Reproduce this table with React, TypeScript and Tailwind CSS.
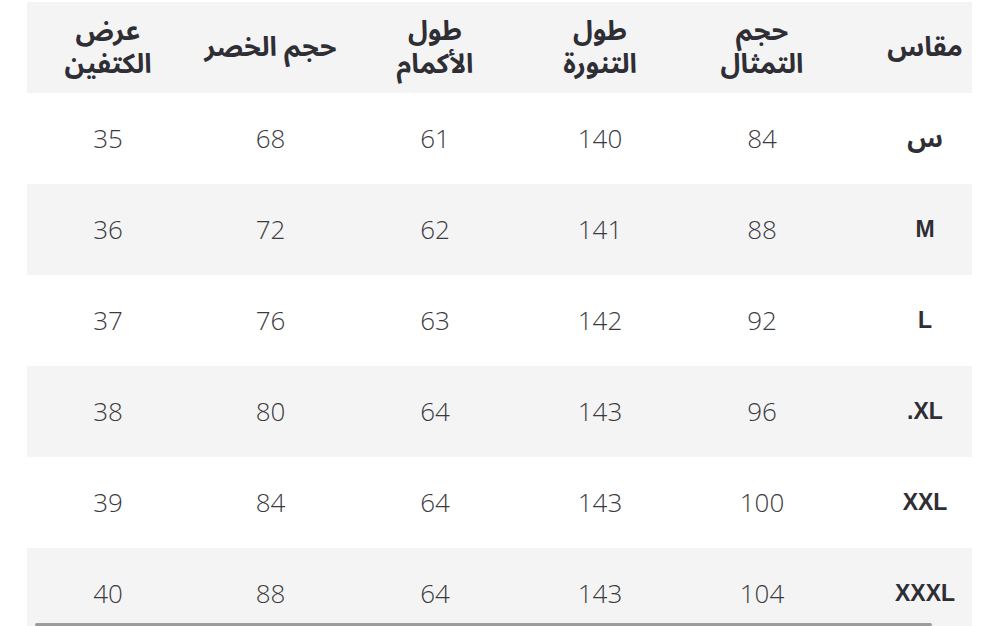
const headers: string[][] = [
  ["مقاس"],
  ["حجم", "التمثال"],
  ["طول", "التنورة"],
  ["طول", "الأكمام"],
  ["حجم الخصر"],
  ["عرض", "الكتفين"],
];

const rows: [string, ...number[]][] = [
  ["س", 84, 140, 61, 68, 35],
  ["M", 88, 141, 62, 72, 36],
  ["L", 92, 142, 63, 76, 37],
  [".XL", 96, 143, 64, 80, 38],
  ["XXL", 100, 143, 64, 84, 39],
  ["XXXL", 104, 143, 64, 88, 40],
];

const grid = "grid grid-cols-[130px_160px_164px_166px_163px_162px]";
const arabic = "font-['Noto_Sans_Arabic','DejaVu_Sans',sans-serif]";

export default function App() {
  return (
    <div className="relative h-[626px] w-[1000px] overflow-hidden bg-white pt-[2px]">
      <div dir="rtl" className="ml-[27px] w-[945px]">
        <div className={`${grid} h-[91px] items-center bg-[#f4f4f5]`}>
          {headers.map((lines, i) => (
            <div
              key={i}
              className={`${arabic} text-center text-[27px] font-bold leading-[33px] text-[#2e2e34] ${i === 0 ? "pl-[36px]" : ""}`}
            >
              {lines.map((l) => (
                <div key={l}>{l}</div>
              ))}
            </div>
          ))}
        </div>
        {rows.map((r, ri) => (
          <div
            key={ri}
            className={`${grid} h-[91px] items-center ${ri % 2 === 1 ? "bg-[#f4f4f5]" : "bg-white"}`}
          >
            <div
              dir="ltr"
              className={`pl-[36px] text-center font-bold text-[#2e2e34] ${
                ri === 0 ? `${arabic} text-[26px]` : "font-['Liberation_Sans',Arial,sans-serif] text-[23px]"
              }`}
            >
              {r[0]}
            </div>
            {r.slice(1).map((v, ci) => (
              <div
                key={ci}
                className="text-center font-['Open_Sans',sans-serif] text-[26px] font-light text-[#3b3b3f]"
              >
                {v}
              </div>
            ))}
          </div>
        ))}
      </div>
      <div className="absolute left-[35px] top-[623px] h-[3px] w-[897px] rounded-full bg-[#9c9c9c]" />
    </div>
  );
}
